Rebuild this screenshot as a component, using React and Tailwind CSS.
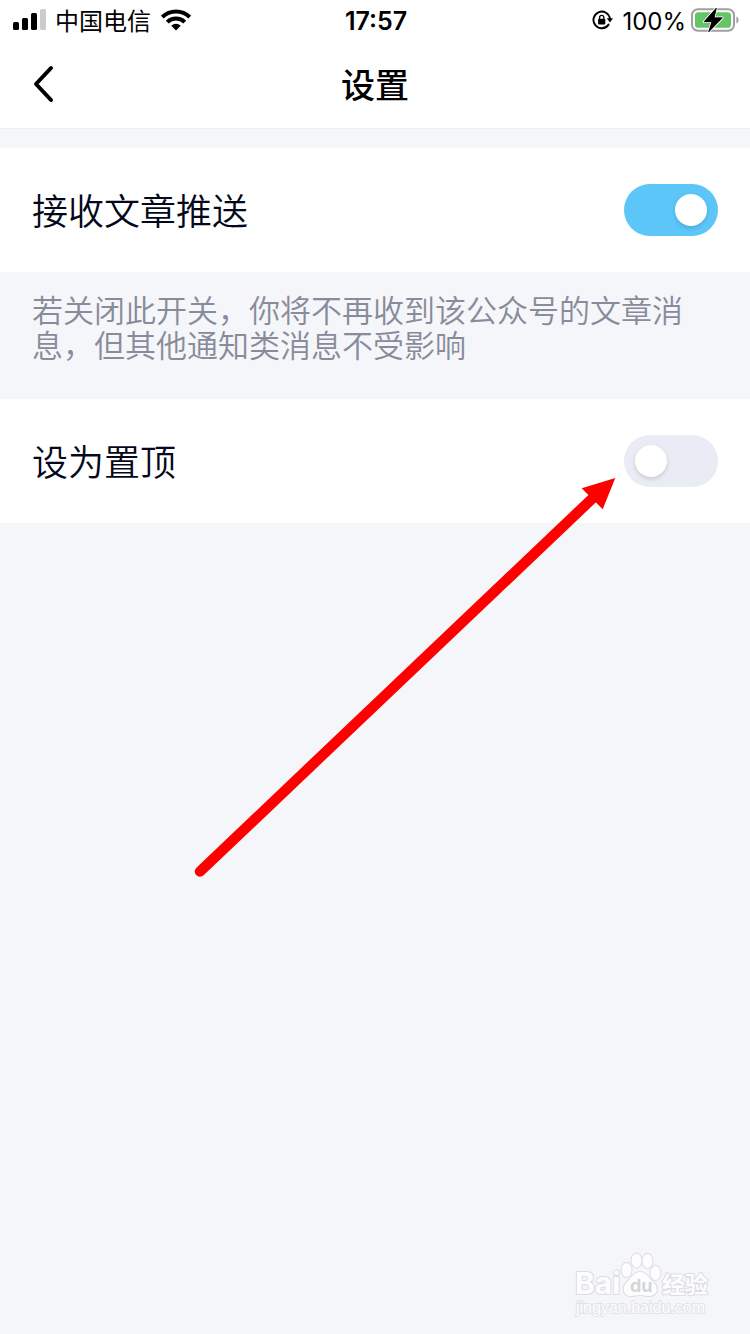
import { useState } from "react";

function SignalIcon() {
  return (
    <svg className="w-[34px] h-[22px]" viewBox="0 0 34 22" aria-hidden="true">
      <rect x="0" y="13" width="6" height="8" rx="1.5" />
      <rect x="9" y="9" width="6" height="12" rx="1.5" />
      <rect x="18" y="4" width="6" height="17" rx="1.5" />
      <rect x="27" y="0" width="6" height="21" rx="1.5" fill="#cbcbcb" />
    </svg>
  );
}

function WifiIcon() {
  return (
    <svg className="w-[30px] h-[22px]" viewBox="0 0 30 22" aria-hidden="true">
      <g fill="none" stroke="#000" strokeWidth="4">
        <path d="M1.3 8.1A19.4 19.4 0 0 1 28.7 8.1" />
        <path d="M6.3 13.1A12.4 12.4 0 0 1 23.7 13.1" />
      </g>
      <path d="M15 21.5L10.3 16.8A6.7 6.7 0 0 1 19.7 16.8Z" />
    </svg>
  );
}

function RotationLockIcon() {
  return (
    <svg className="w-[21px] h-[20px]" viewBox="0 0 21 20" aria-hidden="true">
      <path d="M18 9A8.3 8.3 0 1 0 16.6 14.6" fill="none" stroke="#000" strokeWidth="1.9" strokeLinecap="round" />
      <path d="M14.8 8.2H21L17.9 12.4Z" />
      <rect x="6.1" y="8.8" width="7.2" height="5.6" rx="0.8" />
      <path d="M7.6 9V7.4A2.1 2.1 0 0 1 11.8 7.4V9" fill="none" stroke="#000" strokeWidth="1.3" />
    </svg>
  );
}

function BatteryIcon() {
  return (
    <svg className="w-[48px] h-[24px] overflow-visible" viewBox="0 0 48 24" aria-hidden="true">
      <rect x="1" y="1.2" width="42" height="21.6" rx="6" fill="none" stroke="#a0a0a0" strokeWidth="2" />
      <path d="M45.4 8.5C48.3 9.6 48.3 14.4 45.4 15.5Z" fill="#a0a0a0" />
      <rect x="4" y="4.2" width="36" height="15.6" rx="3.4" fill="#65c466" />
      <path
        d="M25.4 0L13 13.8H20.8L17.6 24L31.4 9.8H23.2Z"
        stroke="#fff"
        strokeWidth="2.4"
        strokeLinejoin="round"
        paintOrder="stroke"
      />
      <path d="M25.4 0L13 13.8H20.8L17.6 24L31.4 9.8H23.2Z" stroke="#000" strokeWidth="0.6" strokeLinejoin="round" />
    </svg>
  );
}

function StatusBar() {
  return (
    <div className="grid grid-cols-[1fr_auto_1fr] items-center h-10 pl-[13px] pr-[11px] text-2xl">
      <div className="flex items-center">
        <SignalIcon />
        <span className="ml-2 pt-[3px]">中国电信</span>
        <span className="ml-[10px]">
          <WifiIcon />
        </span>
      </div>
      <time className="pt-[3px] text-[25px] font-semibold">17:57</time>
      <div className="flex items-center justify-end">
        <RotationLockIcon />
        <span className="ml-[9px] mr-[5px] pt-[3px]">100%</span>
        <BatteryIcon />
      </div>
    </div>
  );
}

function SwitchRow({ id, label, checked, onChange }) {
  return (
    <div className="flex items-center justify-between h-[124px] px-8 bg-white">
      <label htmlFor={id} className="pt-[3px] text-4xl leading-[52px] font-[350] text-[#03081a]">
        {label}
      </label>
      <input
        id={id}
        type="checkbox"
        role="switch"
        checked={checked}
        onChange={(e) => onChange(e.target.checked)}
        className="appearance-none flex items-center w-[94px] h-[52px] px-[11px] rounded-full cursor-pointer bg-[#e9ebf5] checked:bg-[#5bc6f7] checked:justify-end before:content-[''] before:w-8 before:h-8 before:rounded-full before:bg-white before:shadow-[0_2px_4px_rgba(0,0,0,0.14)]"
      />
    </div>
  );
}

function Arrow() {
  return (
    <svg
      className="absolute left-[190px] top-[470px] w-[430px] h-[410px] pointer-events-none"
      viewBox="190 470 430 410"
      aria-hidden="true"
    >
      <path d="M200 871.5L596 495" stroke="#f00" strokeWidth="10.5" strokeLinecap="round" />
      <path d="M615.3 478L581.7 488.3L602.7 509.3Z" fill="#f00" />
    </svg>
  );
}

function Watermark() {
  return (
    <svg
      className="absolute right-[36px] bottom-[12px] w-[144px] h-[72px] pointer-events-none"
      viewBox="0 0 144 72"
      fill="#fdfdfe"
      stroke="#dcdde1"
      strokeWidth="2"
      strokeLinejoin="round"
      paintOrder="stroke"
    >
      <text x="5" y="44" fontSize="30" fontWeight="700" fontFamily="Inter, sans-serif">
        Bai
      </text>
      <ellipse cx="56.5" cy="20" rx="5" ry="7" />
      <ellipse cx="66.5" cy="10.5" rx="5" ry="7" />
      <ellipse cx="77.5" cy="11" rx="5" ry="7" />
      <ellipse cx="85.5" cy="23" rx="5" ry="7" />
      <path d="M70 22C77 22 79 29 84 33C89 38 87 46 79 46C75 46 73 45 70 45C67 45 65 46 61 46C53 46 52 38 56 33C61 29 63 22 70 22Z" />
      <text x="60" y="42" fontSize="18" fontWeight="700" fontFamily="Inter, sans-serif" fill="#d3d5da" stroke="none">
        du
      </text>
      <text x="92" y="43" fontSize="23" fontWeight="700" fontFamily="'Noto Sans CJK SC', sans-serif">
        经验
      </text>
      <text x="6" y="63" fontSize="16" fontFamily="'Liberation Sans', sans-serif" stroke="#e2e3e7">
        jingyan.baidu.com
      </text>
    </svg>
  );
}

export default function App() {
  const [push, setPush] = useState(true);
  const [pinned, setPinned] = useState(false);

  return (
    <div className="relative min-h-screen bg-[#f4f6fa] text-black font-[Inter,'Noto_Sans_CJK_SC',sans-serif]">
      <div className="bg-white border-b border-[#ebedf3]">
        <StatusBar />
        <header className="grid grid-cols-[1fr_auto_1fr] items-center h-[88px] px-8">
          <button type="button" aria-label="返回" className="justify-self-start cursor-pointer">
            <svg className="w-[22px] h-[38px]" viewBox="0 0 22 38" fill="none" aria-hidden="true">
              <path d="M19 3L4 19L19 35" stroke="#000" strokeWidth="4" strokeLinecap="round" strokeLinejoin="round" />
            </svg>
          </button>
          <h1 className="pt-[3px] text-[34px] leading-[52px] font-medium">设置</h1>
        </header>
      </div>

      <main className="pt-[19px]">
        <SwitchRow id="push" label="接收文章推送" checked={push} onChange={setPush} />
        <p className="px-8 pt-[21px] pb-9 text-[31px] leading-[35px] font-[350] text-[#888b99]">
          若关闭此开关，你将不再收到该公众号的文章消息，但其他通知类消息不受影响
        </p>
        <SwitchRow id="pin" label="设为置顶" checked={pinned} onChange={setPinned} />
      </main>

      <Arrow />
      <Watermark />
    </div>
  );
}
